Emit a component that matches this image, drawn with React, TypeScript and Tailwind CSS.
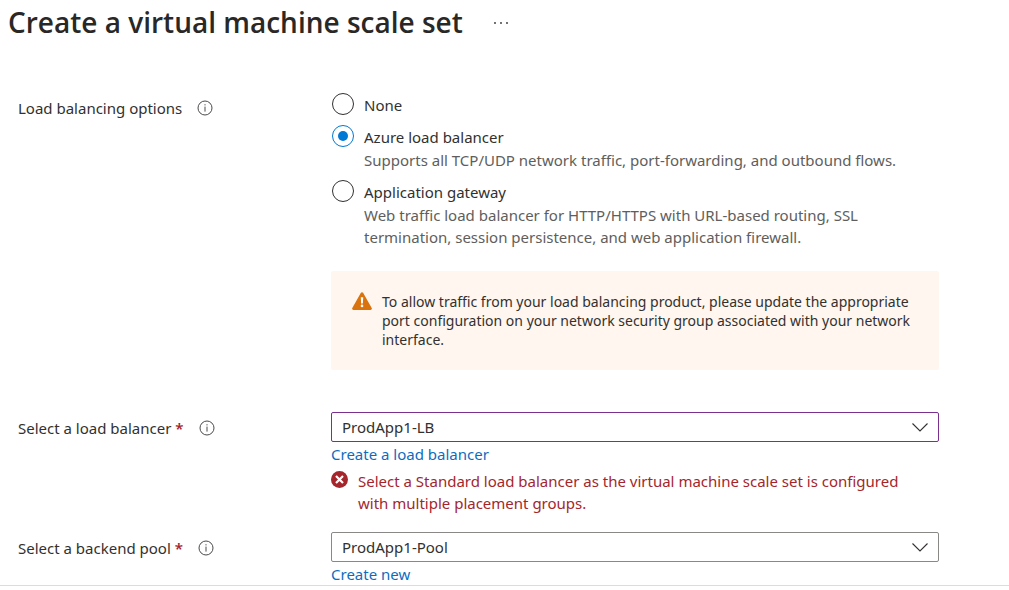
import { useState, type ReactNode } from "react";

function InfoIcon() {
  return (
    <svg width="16" height="16" viewBox="0 0 16 16" fill="none" stroke="#4a4a4a" aria-hidden="true">
      <circle cx="8" cy="8" r="7" />
      <path d="M8 6.6V11.6M8 4.2V5.4" />
    </svg>
  );
}

function WarningIcon() {
  return (
    <svg className="shrink-0" width="20" height="18" viewBox="0 0 20 18" aria-hidden="true">
      <path
        d="M8.9.8c.5-.9 1.7-.9 2.2 0l8.6 15.1c.5.9-.1 2.1-1.2 2.1H1.5C.4 18-.2 16.8.3 15.9z"
        fill="#d9730d"
      />
      <path d="M8.8 5.3h2.4l-.3 6.3H9.1z" fill="#fff" />
      <circle cx="10" cy="13.9" r="1.3" fill="#fff" />
    </svg>
  );
}

function ErrorIcon() {
  return (
    <svg className="mt-px shrink-0" width="17" height="17" viewBox="0 0 17 17" aria-hidden="true">
      <circle cx="8.5" cy="8.5" r="8.5" fill="#a4262c" />
      <path d="M5 5l7 7M12 5l-7 7" stroke="#fff" strokeWidth="2.2" />
    </svg>
  );
}

function Chevron() {
  return (
    <svg
      className="pointer-events-none absolute top-1/2 right-[11px] -translate-y-1/2"
      width="16"
      height="10"
      viewBox="0 0 16 10"
      fill="none"
      stroke="#323130"
      strokeWidth="1.1"
      aria-hidden="true"
    >
      <path d="M.5 1.5L8 9 15.5 1.5" />
    </svg>
  );
}

function Hint({ label }: { label: string }) {
  return (
    <button type="button" aria-label={label}>
      <InfoIcon />
    </button>
  );
}

type OptionProps = {
  id: string;
  label: string;
  detail?: string;
  checked: boolean;
  onSelect: (id: string) => void;
};

function Option({ id, label, detail, checked, onSelect }: OptionProps) {
  return (
    <div className="flex gap-[10px]">
      <input
        type="radio"
        id={id}
        name="load-balancing"
        checked={checked}
        onChange={() => onSelect(id)}
        className="size-[22px] shrink-0 appearance-none rounded-full border border-[#323130] bg-clip-content p-[5px] checked:border-[#0078d4] checked:bg-[#0078d4]"
      />
      <div className="pt-px">
        <label htmlFor={id} className="block">
          {label}
        </label>
        {detail && <p className="mt-px text-[#605e5c]">{detail}</p>}
      </div>
    </div>
  );
}

type PickerProps = {
  id: string;
  label: string;
  value: string;
  borderClass: string;
  children: ReactNode;
};

function Picker({ id, label, value, borderClass, children }: PickerProps) {
  return (
    <div className="flex">
      <div className="flex w-[313px] shrink-0 items-start pt-[5px]">
        <label htmlFor={id}>
          {label} <span className="font-semibold text-[#a4262c]">*</span>
        </label>
        <span className="mt-[3px] ml-[15px] flex">
          <Hint label={`About: ${label}`} />
        </span>
      </div>
      <div className="min-w-0 flex-1">
        <div className="relative">
          <select
            id={id}
            defaultValue={value}
            className={`block h-[30px] w-full appearance-none rounded-[2px] border bg-white px-2.5 text-[15px] outline-none ${borderClass}`}
          >
            <option>{value}</option>
          </select>
          <Chevron />
        </div>
        {children}
      </div>
    </div>
  );
}

const OPTIONS = [
  { id: "none", label: "None" },
  {
    id: "azure",
    label: "Azure load balancer",
    detail: "Supports all TCP/UDP network traffic, port-forwarding, and outbound flows.",
  },
  {
    id: "gateway",
    label: "Application gateway",
    detail:
      "Web traffic load balancer for HTTP/HTTPS with URL-based routing, SSL termination, session persistence, and web application firewall.",
  },
];

export default function App() {
  const [selected, setSelected] = useState("azure");

  return (
    <main className="border-b border-[#dcdcdc] bg-white font-['Noto_Sans','Open_Sans',sans-serif] text-[15px] leading-[22px] text-[#323130]">
      <header className="flex items-center gap-[30px] px-2">
        <h1 className="font-['Open_Sans','Noto_Sans',sans-serif] text-[28px] leading-[44px] font-semibold text-[#292827]">
          Create a virtual machine scale set
        </h1>
        <button type="button" aria-label="More actions">
          <svg width="16" height="6" viewBox="0 0 16 6" fill="#323130" aria-hidden="true">
            <circle cx="2" cy="4" r="0.9" />
            <circle cx="8" cy="4" r="0.9" />
            <circle cx="14" cy="4" r="0.9" />
          </svg>
        </button>
      </header>

      <form className="pt-[49px] pr-[70px] pl-[18px]">
        <div className="flex">
          <div className="flex w-[313px] shrink-0 items-start pt-[4px]">
            <span id="balancing-label">Load balancing options</span>
            <span className="mt-[3px] ml-[15px] flex">
              <Hint label="About load balancing options" />
            </span>
          </div>
          <div className="min-w-0 flex-1">
            <div
              role="radiogroup"
              aria-labelledby="balancing-label"
              className="flex flex-col gap-[9px] pl-px"
            >
              {OPTIONS.map((option) => (
                <Option
                  key={option.id}
                  {...option}
                  checked={selected === option.id}
                  onSelect={setSelected}
                />
              ))}
            </div>
            <div
              role="note"
              className="mt-[23px] flex gap-[10px] rounded-[2px] bg-[#fff6ef] py-[21px] pr-4 pl-[21px] text-[14px] leading-[19px]"
            >
              <WarningIcon />
              <p>
                To allow traffic from your load balancing product, please update the appropriate
                port configuration on your network security group associated with your network
                interface.
              </p>
            </div>
          </div>
        </div>

        <div className="mt-[42px] flex flex-col gap-[18px]">
          <Picker
            id="balancer"
            label="Select a load balancer"
            value="ProdApp1-LB"
            borderClass="border-[#7b2f8e]"
          >
            <a href="#create-balancer" className="mt-px block w-fit text-[#0f6cbd]">
              Create a load balancer
            </a>
            <div role="alert" className="mt-[5px] flex gap-[10px] pr-5 text-[#a4262c]">
              <ErrorIcon />
              <p>
                Select a Standard load balancer as the virtual machine scale set is configured with
                multiple placement groups.
              </p>
            </div>
          </Picker>
          <Picker
            id="pool"
            label="Select a backend pool"
            value="ProdApp1-Pool"
            borderClass="border-[#8a8886]"
          >
            <a href="#create-pool" className="mt-px block w-fit text-[#0f6cbd]">
              Create new
            </a>
          </Picker>
        </div>
      </form>
    </main>
  );
}
